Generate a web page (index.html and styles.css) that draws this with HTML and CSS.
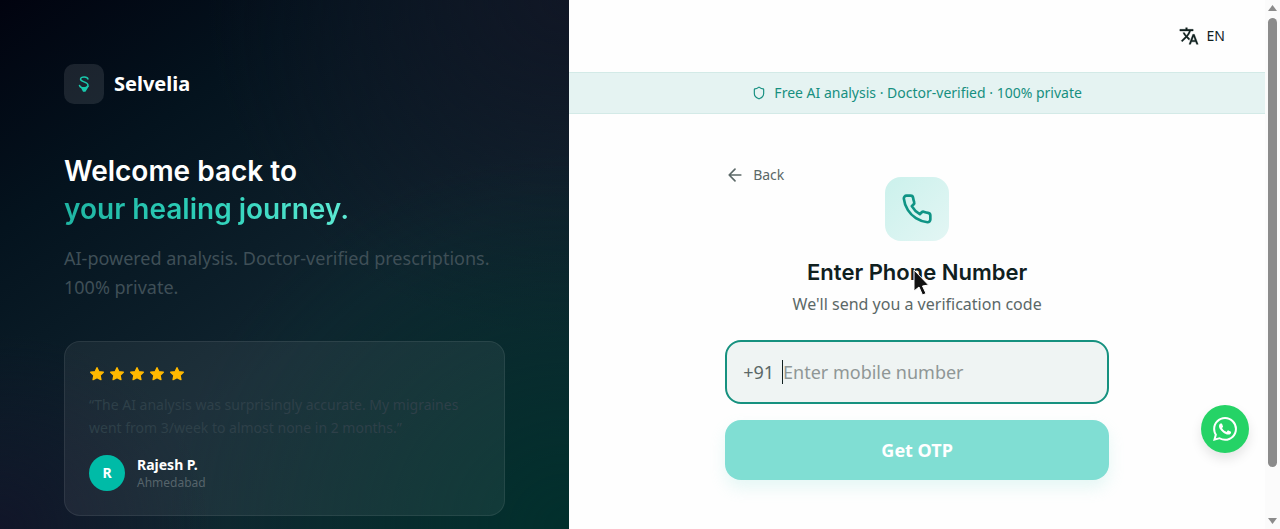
FILE: index.html
```html
<!DOCTYPE html>
<html lang="en">

<head>
    <meta charset="UTF-8">
    <meta name="viewport" content="width=device-width, initial-scale=1.0">
    <title>Selvelia</title>
    <link rel="stylesheet" href="styles.css">
</head>

<body>
    <aside class="brand-panel">
        <div class="logo">
            <span class="logo-mark">
                <svg width="20" height="20" viewBox="0 0 20 20" fill="none" stroke="#19c9ad" stroke-linecap="round">
                    <path d="M14 5C13.500 2.500 7 2.200 6.500 5c-.4 3 7.500 2.800 7.500 6 0 1.800-1.500 2.800-3.500 3" stroke-width="1.400" />
                    <path d="M5.500 11.500c.3 1.600 1.500 2 3 2.500M7.500 13.500l2 3.500h1.500l2.500-4-2.500 1z" fill="#19c9ad" stroke-width="1.500" />
                </svg>
            </span>
            <span class="logo-name">Selvelia</span>
        </div>

        <h1>Welcome back to<br><span class="highlight">your healing journey.</span></h1>
        <p class="tagline">AI-powered analysis. Doctor-verified prescriptions. 100% private.</p>

        <div class="testimonial">
            <div class="stars">
                <svg viewBox="0 0 24 24"><path d="M12 2.500l2.900 6 6.600.9-4.800 4.600 1.200 6.500-5.900-3.100-5.900 3.100 1.200-6.500-4.800-4.600 6.600-.9z" /></svg>
                <svg viewBox="0 0 24 24"><path d="M12 2.500l2.900 6 6.600.9-4.800 4.600 1.200 6.500-5.900-3.100-5.900 3.100 1.200-6.500-4.800-4.600 6.600-.9z" /></svg>
                <svg viewBox="0 0 24 24"><path d="M12 2.500l2.900 6 6.600.9-4.800 4.600 1.200 6.500-5.900-3.100-5.900 3.100 1.200-6.500-4.800-4.600 6.600-.9z" /></svg>
                <svg viewBox="0 0 24 24"><path d="M12 2.500l2.900 6 6.600.9-4.800 4.600 1.200 6.500-5.900-3.100-5.900 3.100 1.200-6.500-4.800-4.600 6.600-.9z" /></svg>
                <svg viewBox="0 0 24 24"><path d="M12 2.500l2.900 6 6.600.9-4.800 4.600 1.200 6.500-5.900-3.100-5.900 3.100 1.200-6.500-4.800-4.600 6.600-.9z" /></svg>
            </div>
            <p class="quote">“The AI analysis was surprisingly accurate. My migraines went from 3/week to almost none in 2 months.”</p>
            <div class="author">
                <span class="avatar">R</span>
                <div>
                    <div class="author-name">Rajesh P.</div>
                    <div class="author-city">Ahmedabad</div>
                </div>
            </div>
        </div>
    </aside>

    <main class="content">
        <header class="topbar">
            <button type="button" class="lang">
                <svg width="20" height="20" viewBox="0 0 24 24" fill="currentColor" stroke="currentColor">
                    <path d="M12.870 15.070l-2.540-2.510.03-.03A17.520 17.520 0 0 0 14.070 6H17V4h-7V2H8v2H1v2h11.170C11.500 7.920 10.440 9.750 9 11.350 8.070 10.320 7.300 9.190 6.690 8h-2c.73 1.630 1.730 3.170 2.980 4.560l-5.090 5.020L4 19l5-5 3.110 3.110.76-2.040zM18.500 10h-2L12 22h2l1.120-3h4.750L21 22h2l-4.500-12zm-2.620 7l1.620-4.330L19.120 17h-3.240z" stroke-width=".4" />
                </svg>
                EN
            </button>
        </header>

        <div class="banner">
            <svg width="14" height="14" viewBox="0 0 24 24" fill="none" stroke="currentColor" stroke-width="2" stroke-linejoin="round">
                <path d="M20 13c0 5-3.500 7.500-7.660 8.950a1 1 0 0 1-.67-.01C7.500 20.500 4 18 4 13V6a1 1 0 0 1 1-1c2 0 4.500-1.200 6.240-2.720a1.170 1.170 0 0 1 1.520 0C14.510 3.810 17 5 19 5a1 1 0 0 1 1 1z" />
            </svg>
            Free AI analysis · Doctor-verified · 100% private
        </div>

        <form class="login">
            <div class="login-top">
                <button type="button" class="back">
                    <svg width="20" height="20" viewBox="0 0 24 24" fill="none" stroke="currentColor" stroke-width="2" stroke-linecap="round" stroke-linejoin="round">
                        <path d="M12 19l-7-7 7-7M19 12H5" />
                    </svg>
                    Back
                </button>
                <span class="phone-icon">
                    <svg width="32" height="32" viewBox="0 0 24 24" fill="none" stroke="currentColor" stroke-width="2" stroke-linecap="round" stroke-linejoin="round">
                        <path d="M22 16.920v3a2 2 0 0 1-2.180 2 19.790 19.790 0 0 1-8.630-3.070 19.500 19.500 0 0 1-6-6 19.790 19.790 0 0 1-3.070-8.670A2 2 0 0 1 4.110 2h3a2 2 0 0 1 2 1.720 12.840 12.840 0 0 0 .7 2.810 2 2 0 0 1-.45 2.110L8.090 9.910a16 16 0 0 0 6 6l1.270-1.270a2 2 0 0 1 2.110-.45 12.840 12.840 0 0 0 2.810.7A2 2 0 0 1 22 16.920z" />
                    </svg>
                </span>
            </div>

            <div class="title">
                <h2>Enter Phone Number</h2>
                <svg class="pointer" width="16" height="28" viewBox="0 0 16 28">
                    <path d="M1 1v21l5-4 3.500 8 3.500-1.500-3.500-7.500 6-1z" fill="#111" stroke="#fff" stroke-width="1" />
                </svg>
            </div>
            <p class="hint">We'll send you a verification code</p>

            <div class="phone-field">
                <label for="mobile">+91</label>
                <span class="caret"></span>
                <input type="tel" id="mobile" name="mobile" placeholder="Enter mobile number">
            </div>
            <button type="submit" class="submit">Get OTP</button>
        </form>
    </main>

    <div class="scrollbar" aria-hidden="true">
        <svg width="11" height="8" viewBox="0 0 11 8"><path d="M5.500 1L10 7H1z" /></svg>
        <div class="track"><div class="thumb"></div></div>
        <svg width="11" height="8" viewBox="0 0 11 8"><path d="M5.500 7L10 1H1z" /></svg>
    </div>

    <a href="#" class="whatsapp" aria-label="WhatsApp">
        <svg width="24" height="24" viewBox="0 0 24 24" fill="#fff">
            <path d="M17.472 14.382c-.297-.149-1.758-.867-2.030-.967-.273-.099-.471-.148-.67.15-.197.297-.767.966-.94 1.164-.173.199-.347.223-.644.075-.297-.15-1.255-.463-2.390-1.475-.883-.788-1.480-1.761-1.653-2.059-.173-.297-.018-.458.13-.606.134-.133.298-.347.446-.52.149-.174.198-.298.298-.497.099-.198.05-.371-.025-.52-.075-.149-.669-1.612-.916-2.207-.242-.579-.487-.5-.669-.51-.173-.008-.371-.01-.57-.01-.198 0-.52.074-.792.372-.272.297-1.040 1.016-1.040 2.479 0 1.462 1.065 2.875 1.213 3.074.149.198 2.096 3.200 5.077 4.487.709.306 1.262.489 1.694.625.712.227 1.360.195 1.871.118.571-.085 1.758-.719 2.006-1.413.248-.694.248-1.289.173-1.413-.074-.124-.272-.198-.57-.347m-5.421 7.403h-.004a9.870 9.870 0 0 1-5.031-1.378l-.361-.214-3.741.982.998-3.648-.235-.374a9.860 9.860 0 0 1-1.510-5.260c.001-5.450 4.436-9.884 9.888-9.884 2.640 0 5.122 1.030 6.988 2.898a9.825 9.825 0 0 1 2.893 6.994c-.003 5.450-4.437 9.884-9.885 9.884m8.413-18.297A11.815 11.815 0 0 0 12.050 0C5.495 0 .160 5.335.157 11.892c0 2.096.547 4.142 1.588 5.945L.057 24l6.305-1.654a11.882 11.882 0 0 0 5.683 1.448h.005c6.554 0 11.890-5.335 11.893-11.893a11.821 11.821 0 0 0-3.480-8.413z" />
        </svg>
    </a>
</body>

</html>
```
FILE: styles.css
```css
* {
    box-sizing: border-box;
}

body {
    display: grid;
    grid-template-columns: 9fr 11fr 15px;
    height: 100vh;
    margin: 0;
    overflow: hidden;
    font-family: "Noto Sans", sans-serif;
    font-size: 14px;
    line-height: 20px;
    color: #10201f;
    background-color: #fefefe;
}

h1,
h2,
p {
    margin: 0;
}

h1,
h2 {
    font-family: Inter, sans-serif;
    font-weight: 600;
}

button,
input {
    font: inherit;
    border: none;
    background: none;
    padding: 0;
}

button {
    cursor: pointer;
}

/* left panel */
.brand-panel {
    min-width: 0;
    height: 100vh;
    padding: 64px 64px 0;
    overflow: hidden;
    background:
        radial-gradient(ellipse at 100% 100%, rgba(0, 48, 44, 0.9), transparent 50%),
        radial-gradient(ellipse at 0% 100%, rgba(17, 20, 40, 0.9), transparent 26%),
        radial-gradient(ellipse at 100% 0%, rgba(17, 22, 37, 0.9), transparent 45%),
        linear-gradient(145deg, #01030f 0%, #04131e 25%, #10242f 60%, #0f2a30 100%);
}

.logo {
    display: flex;
    align-items: center;
    gap: 10px;
    margin-bottom: 48px;
}

.logo-mark {
    display: flex;
    align-items: center;
    justify-content: center;
    width: 40px;
    height: 40px;
    border-radius: 10px;
    background-color: rgba(255, 255, 255, 0.1);
}

.logo-name {
    font-size: 20px;
    font-weight: 700;
    color: #fff;
}

h1 {
    font-size: 28px;
    line-height: 38px;
    color: #fff;
}

.highlight {
    background: linear-gradient(90deg, #1fb5a3, #2dd0b9 50%, #5eead4);
    -webkit-background-clip: text;
    background-clip: text;
    color: transparent;
}

.tagline {
    margin-top: 16px;
    font-size: 18px;
    line-height: 29px;
    color: #3f4f57;
}

.testimonial {
    margin-top: 39px;
    padding: 24px;
    border: 1px solid rgba(255, 255, 255, 0.08);
    border-radius: 16px;
    background-color: rgba(255, 255, 255, 0.06);
}

.stars {
    display: flex;
    gap: 4px;
}

.stars svg {
    width: 16px;
    height: 16px;
    fill: #ffb900;
    stroke: #ffb900;
    stroke-width: 2;
    stroke-linejoin: round;
}

.quote {
    margin: 11px 0 16px;
    line-height: 23px;
    color: #2e4049;
}

.author {
    display: flex;
    align-items: center;
    gap: 12px;
}

.avatar {
    width: 36px;
    border-radius: 50%;
    background-color: #00bba7;
    line-height: 36px;
    text-align: center;
    font-weight: 700;
    color: #fff;
}

.author-name {
    font-weight: 700;
    color: #fff;
}

.author-city {
    font-size: 12px;
    line-height: 16px;
    color: #56646b;
}

/* right side */
.content {
    min-width: 0;
}

.topbar {
    display: flex;
    align-items: center;
    justify-content: flex-end;
    height: 72px;
    padding: 0 40px;
}

.lang {
    display: flex;
    align-items: center;
    gap: 8px;
    color: #10201f;
}

.banner {
    display: flex;
    align-items: center;
    justify-content: center;
    gap: 8px;
    padding: 10px;
    border-top: 1px solid #d3eae7;
    border-bottom: 1px solid #d3eae7;
    background-color: #e5f3f2;
    color: #168f80;
}

.login {
    max-width: 384px;
    margin: 0 auto;
    padding-top: 51px;
    text-align: center;
}

.login-top {
    display: grid;
    grid-template-columns: 1fr auto 1fr;
    align-items: start;
}

.back {
    display: flex;
    align-items: center;
    gap: 8px;
    color: #5b6867;
}

.phone-icon {
    display: flex;
    align-items: center;
    justify-content: center;
    width: 64px;
    height: 64px;
    margin-top: 12px;
    border-radius: 16px;
    background: linear-gradient(135deg, #cbf1ec, #e3f6f4);
    color: #0f9485;
}

.title {
    position: relative;
    margin-top: 15px;
}

h2 {
    font-size: 22px;
    line-height: 32px;
}

/* mouse pointer resting over the title */
.pointer {
    position: absolute;
    top: 13px;
    left: 50%;
    margin-left: -4px;
}

.hint {
    margin-top: 4px;
    font-size: 16px;
    line-height: 24px;
    color: #5b6867;
}

.phone-field {
    display: flex;
    align-items: center;
    height: 64px;
    margin-top: 24px;
    padding: 0 16px;
    border: 2px solid #16917f;
    border-radius: 16px;
    background-color: #eff4f3;
    font-size: 18px;
}

.phone-field label {
    margin-right: 8px;
    color: #5b6867;
}

.phone-field input {
    flex: 1;
    min-width: 0;
    outline: none;
}

.phone-field input::placeholder {
    color: #8f9796;
}

.caret {
    width: 1px;
    height: 24px;
    background-color: #10201f;
}

.submit {
    width: 100%;
    height: 60px;
    margin-top: 16px;
    border-radius: 16px;
    background-color: #80ded3;
    box-shadow: 0 8px 16px rgba(128, 222, 211, 0.2);
    font-size: 18px;
    font-weight: 700;
    color: #fff;
}

.scrollbar {
    display: flex;
    flex-direction: column;
    align-items: center;
    padding: 4px 0;
    background-color: #fbfbfb;
    fill: #8b8b8b;
}

.track {
    flex: 1;
    width: 9px;
    padding: 6px 0;
}

.thumb {
    height: 91%;
    border-radius: 5px;
    background-color: #8b8b8b;
}

.whatsapp {
    position: fixed;
    right: 31px;
    bottom: 76px;
    display: flex;
    align-items: center;
    justify-content: center;
    width: 48px;
    height: 48px;
    border-radius: 50%;
    background-color: #25d366;
    box-shadow: 0 6px 12px rgba(0, 0, 0, 0.1);
}
```
